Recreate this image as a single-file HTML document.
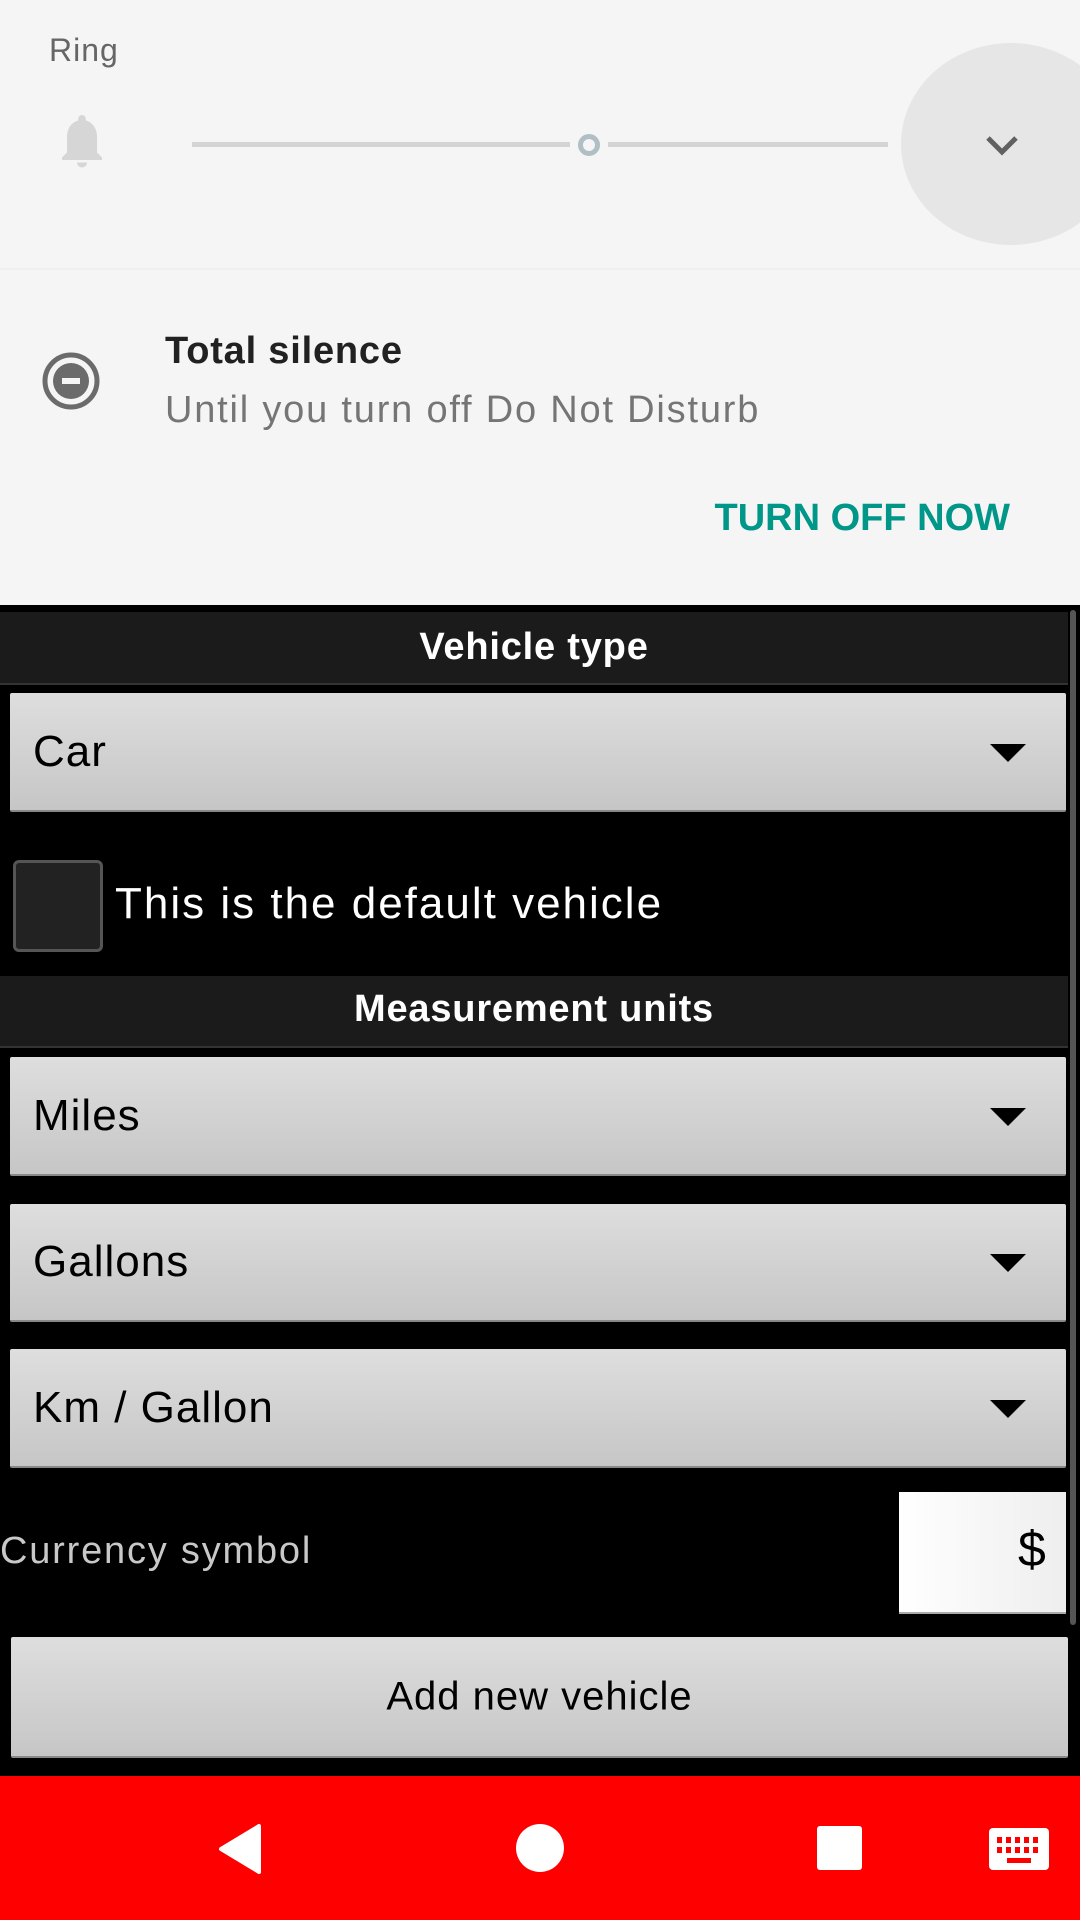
<!DOCTYPE html>
<html><head><meta charset="utf-8"><style>
*{margin:0;padding:0;box-sizing:border-box}
body{width:1080px;height:1920px;background:#000;font-family:"Liberation Sans",sans-serif;position:relative;overflow:hidden}
.a{position:absolute}
.panel{left:0;top:0;width:1080px;height:605px;background:#f5f5f5}
.sp{position:absolute;left:10px;width:1056px;background:linear-gradient(#dedede,#c6c6c6);border-bottom:2px solid #888;border-radius:2px}
.sp span{position:absolute;left:23px;top:50%;transform:translateY(-50%);font-size:44px;color:#000;letter-spacing:1px}
.sp i{position:absolute;right:40px;top:50%;margin-top:-8px;width:0;height:0;border-left:18px solid transparent;border-right:18px solid transparent;border-top:18px solid #000}
.hdr{position:absolute;left:0;width:1068px;background:#1b1b1b;color:#fff;font-weight:bold;font-size:38px;text-align:center;border-bottom:2px solid #333;letter-spacing:0.8px}
</style></head><body>
<div class="a panel"></div>
<div class="a" style="left:0;top:268px;width:1080px;height:2px;background:#efefef"></div>
<div class="a" style="left:49px;top:32px;font-size:32px;color:#666;letter-spacing:1px">Ring</div>
<svg class="a" style="left:52px;top:112px" width="60" height="66" viewBox="0 0 24 26"><path d="M12 1a1.5 1.5 0 0 0-1.5 1.5v.7C7.6 4 6 6.6 6 9.6V16l-2 2v1h16v-1l-2-2V9.6c0-3-1.6-5.6-4.5-6.4v-.7A1.5 1.5 0 0 0 12 1zM10 20a2 2 0 0 0 4 0z" fill="#d6d6d6"/></svg>
<div class="a" style="left:192px;top:142px;width:378px;height:5px;background:#d4d4d4"></div>
<div class="a" style="left:608px;top:142px;width:280px;height:5px;background:#d4d4d4"></div>
<div class="a" style="left:578px;top:134px;width:22px;height:22px;border-radius:50%;border:5px solid #b0bec5;background:#f5f5f5"></div>
<div class="a" style="left:901px;top:43px;width:220px;height:202px;border-radius:50%;background:#e6e6e6"></div>
<svg class="a" style="left:984px;top:133px" width="36" height="26" viewBox="0 0 36 26"><path d="M4 5l14 14L32 5" stroke="#616161" stroke-width="5" fill="none"/></svg>
<svg class="a" style="left:41px;top:351px" width="60" height="60" viewBox="0 0 60 60"><circle cx="30" cy="30" r="26" fill="none" stroke="#6b6b6b" stroke-width="5"/><circle cx="30" cy="30" r="18" fill="#6b6b6b"/><rect x="21" y="27" width="18" height="6" fill="#f5f5f5"/></svg>
<div class="a" style="left:165px;top:330px;font-size:38px;font-weight:bold;color:#212121;letter-spacing:0.8px">Total silence</div>
<div class="a" style="left:165px;top:389px;font-size:38px;color:#757575;letter-spacing:1.8px">Until you turn off Do Not Disturb</div>
<div class="a" style="right:70px;top:497px;font-size:38px;font-weight:bold;color:#009688">TURN OFF NOW</div>

<div class="hdr" style="top:612px;height:73px;line-height:70px">Vehicle type</div>
<div class="sp" style="top:693px;height:119px"><span>Car</span><i></i></div>
<div class="a" style="left:13px;top:860px;width:90px;height:92px;border:3px solid #555;border-radius:6px;background:#222"></div>
<div class="a" style="left:115px;top:879px;font-size:44px;color:#fff;letter-spacing:2px">This is the default vehicle</div>
<div class="hdr" style="top:976px;height:72px;line-height:66px">Measurement units</div>
<div class="sp" style="top:1057px;height:119px"><span>Miles</span><i></i></div>
<div class="sp" style="top:1204px;height:118px"><span>Gallons</span><i></i></div>
<div class="sp" style="top:1349px;height:119px"><span>Km / Gallon</span><i></i></div>
<div class="a" style="left:0;top:1530px;font-size:38px;color:#c8c8c8;letter-spacing:1.8px">Currency symbol</div>
<div class="a" style="left:899px;top:1492px;width:167px;height:122px;background:linear-gradient(90deg,#fff,#eee);border-bottom:2px solid #aaa"></div>
<div class="a" style="left:1018px;top:1520px;font-size:50px;color:#000">$</div>
<div class="sp" style="top:1637px;height:121px;left:11px;width:1057px"><span style="left:0;width:100%;text-align:center;font-size:40px;letter-spacing:1px">Add new vehicle</span></div>
<div class="a" style="left:1070px;top:610px;width:6px;height:1015px;background:#555;border-radius:3px"></div>

<div class="a" style="left:0;top:1776px;width:1080px;height:144px;background:#f00"></div>
<svg class="a" style="left:215px;top:1822px" width="48" height="54" viewBox="0 0 48 54"><path d="M44 4v46L6 27z" fill="#fff" stroke="#fff" stroke-width="4" stroke-linejoin="round"/></svg>
<div class="a" style="left:516px;top:1824px;width:48px;height:48px;border-radius:50%;background:#fff"></div>
<div class="a" style="left:817px;top:1826px;width:45px;height:44px;border-radius:3px;background:#fff"></div>
<svg class="a" style="left:989px;top:1828px" width="60" height="42" viewBox="0 0 60 42"><rect width="60" height="42" rx="4" fill="#fff"/><g fill="#f00"><rect x="8" y="9" width="5" height="6"/><rect x="17" y="9" width="5" height="6"/><rect x="26" y="9" width="5" height="6"/><rect x="35" y="9" width="5" height="6"/><rect x="44" y="9" width="5" height="6"/><rect x="8" y="19" width="5" height="6"/><rect x="17" y="19" width="5" height="6"/><rect x="26" y="19" width="5" height="6"/><rect x="35" y="19" width="5" height="6"/><rect x="44" y="19" width="5" height="6"/><rect x="18" y="30" width="24" height="5"/></g></svg>
</body></html>
